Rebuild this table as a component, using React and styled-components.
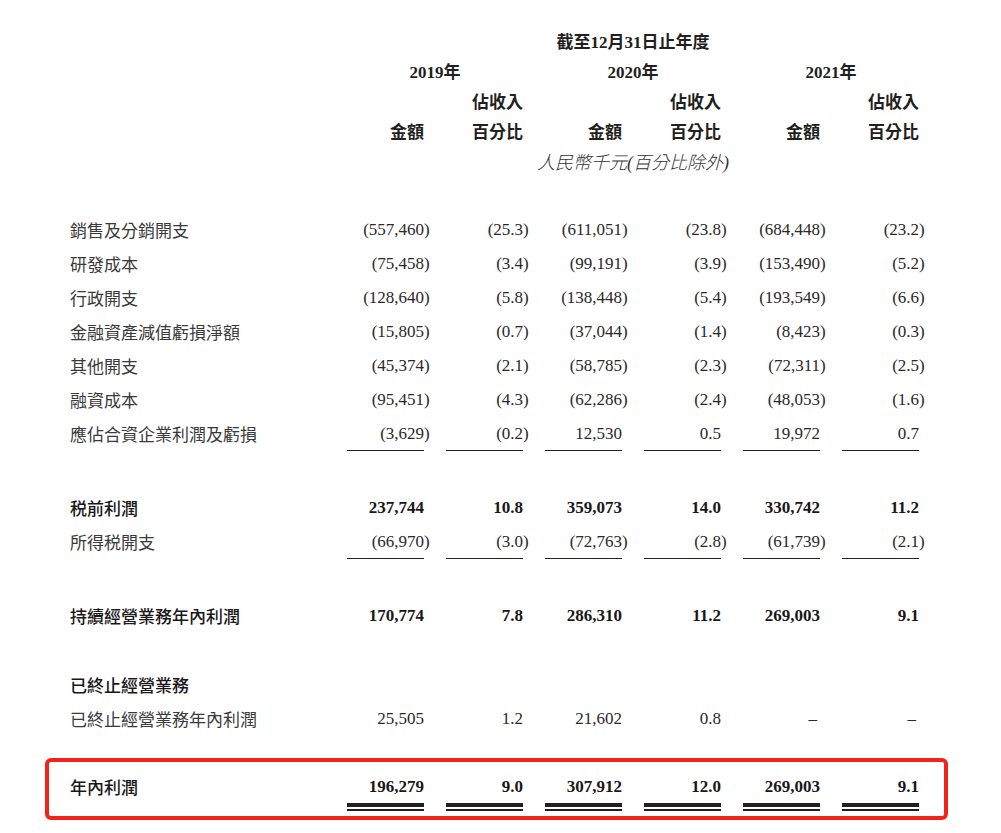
import React from 'react';
import styled, { createGlobalStyle } from 'styled-components';

const GlobalStyle = createGlobalStyle`
  html, body {
    margin: 0;
    padding: 0;
    background: #fff;
  }
  body {
    width: 1001px;
    min-height: 833px;
    color: #231f20;
    font-family: "Liberation Serif", "Noto Sans CJK TC", serif;
  }
`;

const rows = [
  { label: '銷售及分銷開支', values: ['(557,460)', '(25.3)', '(611,051)', '(23.8)', '(684,448)', '(23.2)'] },
  { label: '研發成本', values: ['(75,458)', '(3.4)', '(99,191)', '(3.9)', '(153,490)', '(5.2)'] },
  { label: '行政開支', values: ['(128,640)', '(5.8)', '(138,448)', '(5.4)', '(193,549)', '(6.6)'] },
  { label: '金融資產減值虧損淨額', values: ['(15,805)', '(0.7)', '(37,044)', '(1.4)', '(8,423)', '(0.3)'] },
  { label: '其他開支', values: ['(45,374)', '(2.1)', '(58,785)', '(2.3)', '(72,311)', '(2.5)'] },
  { label: '融資成本', values: ['(95,451)', '(4.3)', '(62,286)', '(2.4)', '(48,053)', '(1.6)'] },
  { label: '應佔合資企業利潤及虧損', values: ['(3,629)', '(0.2)', '12,530', '0.5', '19,972', '0.7'], ruled: true },
];

const Page = styled.div`
  padding-top: 27px;
  padding-bottom: 13px;
`;

const Grid = styled.div`
  display: grid;
  grid-template-columns: 255px repeat(6, 77px);
  column-gap: 22px;
  padding-left: ${(p) => p.$inset ?? 70}px;
  margin-top: ${(p) => p.$top || 0}px;
`;

const RowGroup = styled.div`
  margin-top: ${(p) => p.$top || 0}px;
`;

const HeadCell = styled.div`
  grid-column: ${(p) => p.$col};
  text-align: ${(p) => p.$align || 'right'};
  font-family: "Liberation Serif", "Noto Sans CJK TC", serif;
  font-size: ${(p) => (p.$italic ? 18 : 17)}px;
  font-weight: ${(p) => (p.$italic ? 300 : 700)};
  font-style: ${(p) => (p.$italic ? 'italic' : 'normal')};
  color: ${(p) => (p.$italic ? '#333' : '#231f20')};
  line-height: ${(p) => p.$lh || 30}px;
  white-space: nowrap;
  ${(p) => p.$align === 'center' && 'margin: 0 -30px;'}
`;

const Label = styled.div`
  font-family: "Noto Sans CJK TC", sans-serif;
  font-size: 17px;
  font-weight: ${(p) => (p.$bold ? 500 : 400)};
  color: ${(p) => (p.$bold ? '#1a1718' : '#3a3a3a')};
  line-height: 34px;
  white-space: nowrap;
`;

const Num = styled.div`
  text-align: right;
  font-family: "Liberation Serif", serif;
  font-size: 17px;
  font-weight: ${(p) => (p.$bold ? 700 : 400)};
  color: ${(p) => (p.$bold ? '#1a1718' : '#2b2829')};
  line-height: 34px;
  height: ${(p) => (p.$double ? 42 : 34)}px;
  box-sizing: border-box;
  white-space: nowrap;
  border-bottom: ${(p) => (p.$ruled ? '1px solid #231f20' : 'none')};
  ${(p) =>
    p.$double &&
    `
    background:
      linear-gradient(#231f20, #231f20) left bottom 5px / 100% 4px no-repeat,
      linear-gradient(#231f20, #231f20) left bottom 1px / 100% 2px no-repeat;
  `}
`;

const Hang = styled.span`
  margin-right: -0.34em;
`;

const Dash = styled.span`
  padding-right: 3px;
`;

const TotalBox = styled.div`
  margin: 22px 0 0 45px;
  width: 903px;
  box-sizing: border-box;
  border: 4px solid #f2231b;
  border-radius: 6px;
  padding: 8px 0 4px;
`;

const Value = ({ v }) => {
  if (v === '-') return <Dash>–</Dash>;
  if (v.startsWith('(')) {
    return (
      <>
        {v.slice(0, -1)}
        <Hang>)</Hang>
      </>
    );
  }
  return v;
};

const Row = ({ label, values, bold, ruled, double, inset, top }) => (
  <Grid $inset={inset} $top={top}>
    <Label $bold={bold}>{label}</Label>
    {values &&
      values.map((v, i) => (
        <Num key={i} $bold={bold} $ruled={ruled} $double={double}>
          <Value v={v} />
        </Num>
      ))}
  </Grid>
);

const App = () => {
  return (
    <>
      <GlobalStyle />
      <Page>
        <Grid>
          <HeadCell $col="2 / 8" $align="center" $lh={31}>截至12月31日止年度</HeadCell>
          <HeadCell $col="2 / 4" $align="center">2019年</HeadCell>
          <HeadCell $col="4 / 6" $align="center">2020年</HeadCell>
          <HeadCell $col="6 / 8" $align="center">2021年</HeadCell>
          <HeadCell $col="3">佔收入</HeadCell>
          <HeadCell $col="5">佔收入</HeadCell>
          <HeadCell $col="7">佔收入</HeadCell>
          <HeadCell $col="2">金額</HeadCell>
          <HeadCell $col="3">百分比</HeadCell>
          <HeadCell $col="4">金額</HeadCell>
          <HeadCell $col="5">百分比</HeadCell>
          <HeadCell $col="6">金額</HeadCell>
          <HeadCell $col="7">百分比</HeadCell>
          <HeadCell $col="4 / 6" $align="center" $italic>人民幣千元(百分比除外)</HeadCell>
        </Grid>

        <RowGroup $top={35}>
          {rows.map((r) => (
            <Row key={r.label} {...r} />
          ))}
        </RowGroup>

        <Row top={40} bold label="税前利潤" values={['237,744', '10.8', '359,073', '14.0', '330,742', '11.2']} />
        <Row ruled label="所得税開支" values={['(66,970)', '(3.0)', '(72,763)', '(2.8)', '(61,739)', '(2.1)']} />

        <Row top={40} bold label="持續經營業務年內利潤" values={['170,774', '7.8', '286,310', '11.2', '269,003', '9.1']} />

        <Row top={35} bold label="已終止經營業務" />
        <Row label="已終止經營業務年內利潤" values={['25,505', '1.2', '21,602', '0.8', '-', '-']} />

        <TotalBox>
          <Row inset={21} bold double label="年內利潤" values={['196,279', '9.0', '307,912', '12.0', '269,003', '9.1']} />
        </TotalBox>
      </Page>
    </>
  );
};

export default App;
